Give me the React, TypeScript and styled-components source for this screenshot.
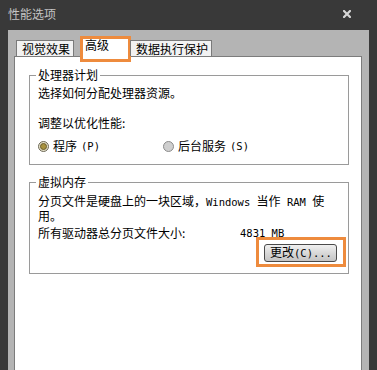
import React from 'react'
import styled, { createGlobalStyle } from 'styled-components'

const GlobalStyle = createGlobalStyle`
  html, body {
    margin: 0;
    padding: 0;
    background: #393939;
  }
  body {
    font-family: "Noto Sans CJK SC", "Noto Sans", sans-serif;
    font-size: 12px;
    color: #000;
  }
`

const Window = styled.div`
  width: 377px;
  height: 370px;
  display: flex;
  flex-direction: column;
  background: #393939;
  overflow: hidden;
`

const TitleBar = styled.div`
  height: 30px;
  flex: none;
  display: flex;
  align-items: center;
  justify-content: space-between;
  padding: 0 26px 3px 8px;
  box-sizing: border-box;
  color: #c4c4c4;
  font-size: 12px;
`

const Frame = styled.div`
  flex: 1;
  margin: 0 8px;
  background: #b4b4b4;
  padding: 0 7px 0 6px;
  display: flex;
  flex-direction: column;
`

const TabStrip = styled.div`
  height: 26px;
  flex: none;
  display: flex;
  align-items: flex-end;
  padding-left: 2px;
  position: relative;
  z-index: 1;
`

const Tab = styled.div<{ $active?: boolean; $gap?: number }>`
  box-sizing: border-box;
  margin-left: ${({ $gap }) => $gap ?? 0}px;
  height: ${({ $active }) => ($active ? 26 : 16)}px;
  margin-bottom: ${({ $active }) => ($active ? -6 : 0)}px;
  padding: ${({ $active }) => ($active ? '0 19px 8px 2px' : '0 3px 0 5px')};
  display: flex;
  align-items: center;
  line-height: 14px;
  background: ${({ $active }) => ($active ? '#fff' : '#f2f2f2')};
  border: ${({ $active }) => ($active ? '3px solid #ee8b3d' : '1px solid #7a7a7a')};
  border-bottom: ${({ $active }) => ($active ? '3px solid #ee8b3d' : 'none')};
`

const Panel = styled.div`
  flex: 1;
  background: #fff;
  border: 1px solid #7c7c7c;
  border-bottom: none;
  padding: 11px 12px 0 14px;
`

const Group = styled.fieldset<{ $top?: number }>`
  margin: ${({ $top }) => $top ?? 0}px 0 0 0;
  padding: 0 2px 0 8px;
  border: 1px solid #9a9a9a;
  min-width: 0;
`

const Legend = styled.legend`
  padding: 0 2px;
  margin-left: -2px;
  line-height: 14px;
`

const Line = styled.div<{ $mt?: number }>`
  margin-top: ${({ $mt }) => $mt ?? 0}px;
  line-height: 14px;
  white-space: nowrap;
`

const Mono = styled.span`
  font-family: "DejaVu Sans Mono", "Liberation Mono", monospace;
  font-size: 10.5px;
  white-space: pre;
`

const RadioRow = styled.div`
  display: flex;
  align-items: center;
  margin-top: 9px;
  margin-bottom: 11px;
  line-height: 14px;
`

const RadioItem = styled.label<{ $width?: number }>`
  display: flex;
  align-items: center;
  gap: 4px;
  width: ${({ $width }) => $width ?? 'auto'}px;
`

const RadioDot = styled.span<{ $checked?: boolean }>`
  width: 11px;
  height: 11px;
  border-radius: 50%;
  box-sizing: border-box;
  border: 1px solid ${({ $checked }) => ($checked ? '#6e6a58' : '#8c8c8c')};
  background: ${({ $checked }) => ($checked ? '#e4dfc8' : '#cfcfcf')};
  display: flex;
  align-items: center;
  justify-content: center;
  &::after {
    content: '';
    display: ${({ $checked }) => ($checked ? 'block' : 'none')};
    width: 5px;
    height: 5px;
    border-radius: 50%;
    background: #a8923e;
    border: 1px solid #6b5d2a;
  }
`

const SizeRow = styled.div`
  display: flex;
  line-height: 14px;
  margin-top: 3px;
`

const SizeLabel = styled.span`
  width: 202px;
`

const ButtonRow = styled.div`
  display: flex;
  justify-content: flex-end;
  margin-top: -3px;
  margin-bottom: 6px;
`

const Highlight = styled.div`
  border: 3px solid #ee8b3d;
  padding: 3px 6px 2px 5px;
`

const Button = styled.button`
  width: 73px;
  height: 18px;
  box-sizing: border-box;
  border: 1px solid #4a4a4a;
  border-radius: 3px;
  background: linear-gradient(#f0f0f0, #d4d4d4 60%, #c4c4c4);
  font-family: inherit;
  font-size: 12px;
  line-height: 14px;
  padding: 0 0 0 5px;
  text-align: left;
  color: #000;
`

const CloseIcon = () => (
  <svg width="8" height="8" viewBox="0 0 8 8">
    <path d="M1 1 L7 7 M7 1 L1 7" stroke="#d6d6d6" strokeWidth="2.2" strokeLinecap="square" />
  </svg>
)

export default function App() {
  return (
    <>
      <GlobalStyle />
      <Window>
        <TitleBar>
          <span>性能选项</span>
          <CloseIcon />
        </TitleBar>
        <Frame>
          <TabStrip>
            <Tab>视觉效果</Tab>
            <Tab $active $gap={6}>高级</Tab>
            <Tab $gap={-1}>数据执行保护</Tab>
          </TabStrip>
          <Panel>
            <Group>
              <Legend>处理器计划</Legend>
              <Line $mt={4}>选择如何分配处理器资源。</Line>
              <Line $mt={16}>调整以优化性能:</Line>
              <RadioRow>
                <RadioItem $width={125}>
                  <RadioDot $checked />
                  程序<Mono>(P)</Mono>
                </RadioItem>
                <RadioItem>
                  <RadioDot />
                  后台服务<Mono>(S)</Mono>
                </RadioItem>
              </RadioRow>
            </Group>
            <Group $top={10}>
              <Legend>虚拟内存</Legend>
              <Line $mt={5}>
                分页文件是硬盘上的一块区域，<Mono>Windows </Mono>当作<Mono> RAM </Mono>使
              </Line>
              <Line>用。</Line>
              <SizeRow>
                <SizeLabel>所有驱动器总分页文件大小:</SizeLabel>
                <Mono>4831 MB</Mono>
              </SizeRow>
              <ButtonRow>
                <Highlight>
                  <Button>
                    更改<Mono>(C)...</Mono>
                  </Button>
                </Highlight>
              </ButtonRow>
            </Group>
          </Panel>
        </Frame>
      </Window>
    </>
  )
}
